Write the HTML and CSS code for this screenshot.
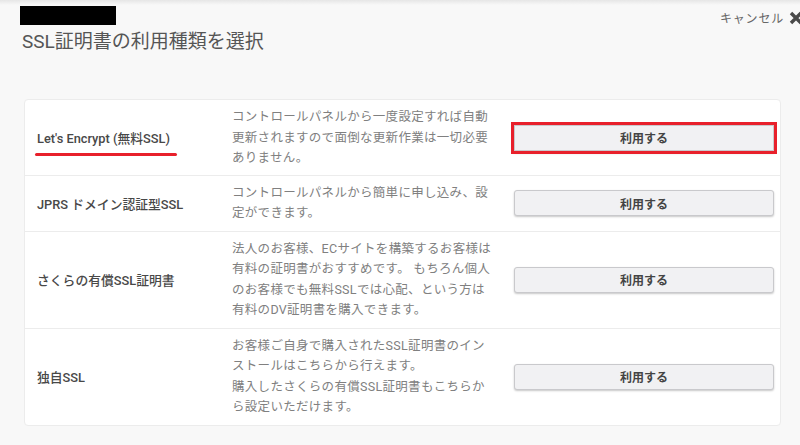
FILE: index.html
```html
<!DOCTYPE html>
<html lang="ja">
<head>
<meta charset="utf-8">
<title>SSL証明書の利用種類を選択</title>
<link rel="stylesheet" href="styles.css">
</head>
<body>
<div class="page">
  <header class="header">
    <div class="head-left">
      <div class="redact"></div>
      <h1 class="title">SSL証明書の利用種類を選択</h1>
    </div>
    <div class="cancel">
      <span>キャンセル</span>
      <svg class="cancel-x" width="14" height="14" viewBox="0 0 14 14"><path d="M2 2 L12 12 M12 2 L2 12" stroke="#4a4a4a" stroke-width="3.4" stroke-linecap="butt"/></svg>
    </div>
  </header>

  <div class="card">
    <div class="row row-1">
      <div class="label"><span class="mark">Let's Encrypt (無料SSL)</span></div>
      <div class="desc">コントロールパネルから一度設定すれば自動<br>更新されますので面倒な更新作業は一切必要<br>ありません。</div>
      <div class="action"><button class="btn btn-hl">利用する</button></div>
    </div>
    <div class="row row-2">
      <div class="label">JPRS ドメイン認証型SSL</div>
      <div class="desc">コントロールパネルから簡単に申し込み、設<br>定ができます。</div>
      <div class="action"><button class="btn">利用する</button></div>
    </div>
    <div class="row row-3">
      <div class="label">さくらの有償SSL証明書</div>
      <div class="desc">法人のお客様、ECサイトを構築するお客様は<br>有料の証明書がおすすめです。 もちろん個人<br>のお客様でも無料SSLでは心配、という方は<br>有料のDV証明書を購入できます。</div>
      <div class="action"><button class="btn">利用する</button></div>
    </div>
    <div class="row row-4">
      <div class="label">独自SSL</div>
      <div class="desc">お客様ご自身で購入されたSSL証明書のイン<br>ストールはこちらから行えます。<br>購入したさくらの有償SSL証明書もこちらか<br>ら設定いただけます。</div>
      <div class="action"><button class="btn">利用する</button></div>
    </div>
  </div>
</div>
</body>
</html>
```

FILE: styles.css
```css
html, body {
  margin: 0;
  padding: 0;
}
body {
  width: 800px;
  height: 445px;
  overflow: hidden;
  background: linear-gradient(to bottom, #e6e6e6 0px, #f8f8f8 5px, #f8f8f8 100%);
  font-family: "Noto Sans CJK JP", "Noto Sans", sans-serif;
  color: #555;
}
.page {
  padding: 6px 0 0 0;
}
.header {
  display: flex;
  justify-content: space-between;
  align-items: flex-start;
  padding-left: 20px;
}
.head-left {
  display: flex;
  flex-direction: column;
}
.redact {
  width: 96px;
  height: 19px;
  background: #000;
}
.title {
  margin: 4px 0 0 2px;
  font-family: "Roboto", "Noto Sans CJK JP", sans-serif;
  font-size: 19px;
  line-height: 26px;
  font-weight: 400;
  letter-spacing: 0;
  color: #555;
}
.cancel {
  display: flex;
  align-items: center;
  gap: 5px;
  margin-top: 4px;
  margin-right: -3px;
  font-size: 12px;
  line-height: 16px;
  letter-spacing: 0.8px;
  color: #666;
}
.cancel-x {
  display: block;
}
.card {
  margin: 44px 0 0 24px;
  width: 757px;
  box-sizing: border-box;
  background: #fff;
  border: 1px solid #ececec;
  border-radius: 4px;
}
.row {
  display: grid;
  grid-template-columns: 195px 282px 260px;
  align-items: center;
  padding: 7px 6px 7px 12px;
  border-top: 1px solid #ececec;
}
.row-1 {
  border-top: none;
  padding-bottom: 6px;
}
.label {
  font-family: "Roboto", "Noto Sans CJK JP", sans-serif;
  font-size: 12.8px;
  font-weight: 500;
  color: #484848;
}
.mark {
  position: relative;
  display: inline-block;
}
.mark::after {
  content: "";
  position: absolute;
  left: -2px;
  right: -7px;
  bottom: -9px;
  height: 3px;
  border-radius: 2px;
  background: #e8202b;
}
.desc {
  font-family: "Roboto", "Noto Sans CJK JP", sans-serif;
  font-size: 12.5px;
  line-height: 20.5px;
  letter-spacing: 0.3px;
  color: #808080;
  white-space: nowrap;
}
.action {
  display: flex;
}
.btn {
  width: 260px;
  height: 26px;
  box-sizing: border-box;
  background: #f1f1f3;
  border: 1px solid #c9c9cc;
  border-radius: 3px;
  box-shadow: 0 1px 2px rgba(0, 0, 0, 0.22);
  font-family: "Noto Sans CJK JP", "Noto Sans", sans-serif;
  font-size: 12px;
  font-weight: 700;
  color: #444;
  padding: 0;
}
.btn-hl {
  outline: 3px solid #e8202b;
  outline-offset: 0;
  border-radius: 0;
  box-shadow: 0 2px 3px rgba(0, 0, 0, 0.2);
}
```
